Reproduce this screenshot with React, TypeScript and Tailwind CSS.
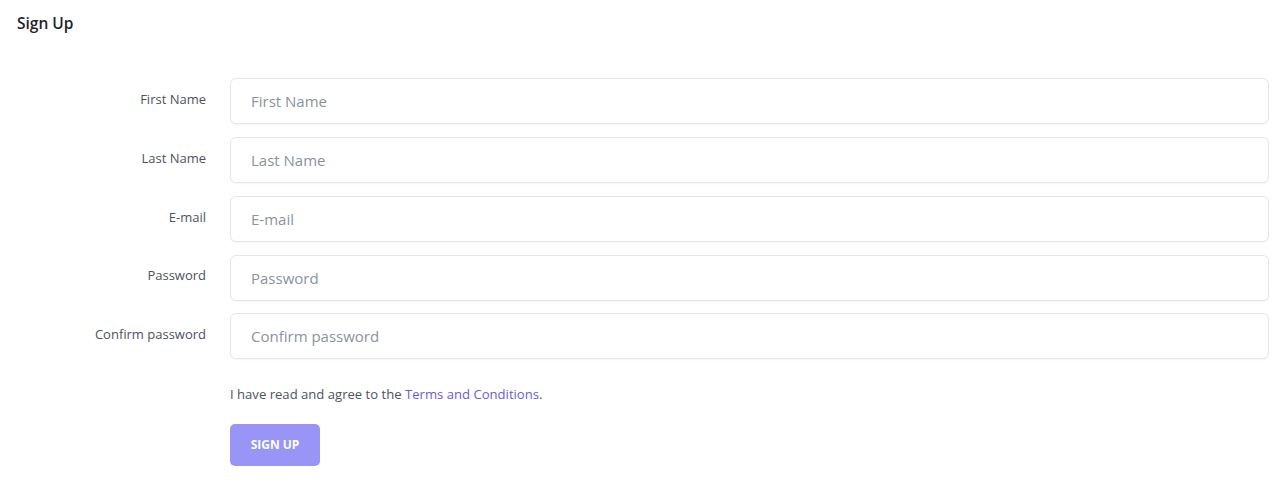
import React from 'react';

const fields = [
  { id: 'firstName', label: 'First Name', type: 'text' },
  { id: 'lastName', label: 'Last Name', type: 'text' },
  { id: 'email', label: 'E-mail', type: 'email' },
  { id: 'password', label: 'Password', type: 'password' },
  { id: 'confirm', label: 'Confirm password', type: 'password' },
];

const App: React.FC = () => {
  return (
    <div className="min-h-screen bg-white text-[#3f4654]" style={{ fontFamily: '"Open Sans", "Noto Sans", sans-serif' }}>
      <h1 className="pl-[17px] pt-[12px] text-[15.5px] font-semibold text-[#1f2329]">Sign Up</h1>

      <form className="mt-[43px] pr-[18px]" onSubmit={(e) => e.preventDefault()}>
        <div className="flex flex-col gap-[12.75px]">
          {fields.map((f) => (
            <div key={f.id} className="flex items-center">
              <label htmlFor={f.id} className="w-[206px] shrink-0 text-right text-[13px] text-[#4b5361] -mt-[3px]">
                {f.label}
              </label>
              <input
                id={f.id}
                type={f.type}
                placeholder={f.label}
                className="ml-[24px] h-[46px] flex-1 rounded-[6px] border border-[#e4e6ea] bg-white px-[20px] text-[15px] text-[#3f4654] shadow-[0_1px_2px_rgba(0,0,0,0.04)] outline-none placeholder:text-[#8a92a0]"
              />
            </div>
          ))}
        </div>

        <div className="ml-[230px] mt-[26px] text-[13.1px] text-[#4b5361]">
          I have read and agree to the <a href="#" className="text-[#6a5bd6]">Terms and Conditions</a>.
        </div>

        <button
          type="submit"
          className="ml-[230px] mt-[19px] h-[42px] w-[90px] rounded-[5px] bg-[#9895f6] text-[12px] font-bold text-white"
        >
          SIGN UP
        </button>
      </form>
    </div>
  );
};

export default App;
